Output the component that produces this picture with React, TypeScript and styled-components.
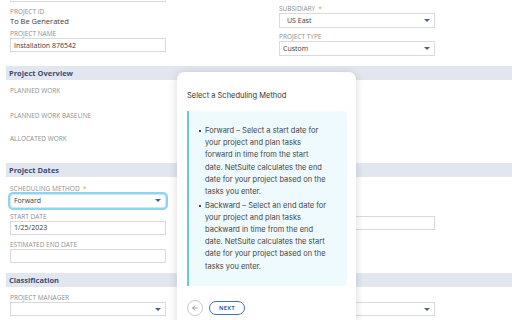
import styled, { createGlobalStyle } from "styled-components";
import { ArrowLeft } from "lucide-react";

const GlobalStyle = createGlobalStyle`
	body {
		margin: 0;
		background: #fff;
		font-family: "Open Sans", "Liberation Sans", sans-serif;
	}
	* {
		box-sizing: border-box;
	}
`;

const Page = styled.div`
	position: relative;
	width: 512px;
	height: 320px;
	overflow: hidden;
	padding-left: 6px;
`;

const Scrolled = styled.div`
	margin-top: -13px;
`;

const Columns = styled.div<{ $top?: number }>`
	display: grid;
	grid-template-columns: 156px 156px;
	column-gap: 113px;
	padding-left: 4px;
	padding-top: ${(p) => p.$top ?? 0}px;
`;

const Column = styled.div`
	display: flex;
	flex-direction: column;
`;

const Band = styled.div<{ $top: number }>`
	margin-top: ${(p) => p.$top}px;
	height: 14px;
	line-height: 14px;
	padding-left: 3px;
	background: #e2e7ef;
	color: #3b4d73;
	font-size: 7.5px;
	font-weight: 700;
`;

const Label = styled.div<{ $top?: number }>`
	margin-top: ${(p) => p.$top ?? 0}px;
	height: 9px;
	line-height: 9px;
	font-size: 6.5px;
	color: #8f8f8f;
	text-transform: uppercase;
	white-space: nowrap;
`;

const Star = styled.span`
	margin-left: 3px;
	color: #e9a23b;
	font-size: 7px;
`;

const Value = styled.div`
	height: 11px;
	line-height: 11px;
	font-size: 7.5px;
	color: #3a3a3a;
`;

const Input = styled.div<{ $top?: number; $height?: number; $indent?: number; $focus?: boolean }>`
	margin-top: ${(p) => p.$top ?? 0}px;
	height: ${(p) => p.$height ?? 14}px;
	display: flex;
	align-items: center;
	justify-content: space-between;
	padding: 0 4px 0 ${(p) => p.$indent ?? 3}px;
	border: 1px solid ${(p) => (p.$focus ? "#c9e9f6" : "#dadada")};
	border-radius: ${(p) => (p.$focus ? 3 : 0)}px;
	box-shadow: ${(p) => (p.$focus ? "0 0 0 2px #8ed4ef" : "none")};
	background: #fff;
	font-size: 7px;
	color: #3a3a3a;
	white-space: nowrap;
`;

const Caret = styled.span`
	width: 0;
	height: 0;
	border-left: 3px solid transparent;
	border-right: 3px solid transparent;
	border-top: 3.5px solid #4b6390;
`;

const Overview = styled.div`
	padding-left: 4px;
	padding-top: 5.5px;
`;

const Popover = styled.div`
	position: absolute;
	left: 177px;
	top: 72px;
	width: 179px;
	height: 270px;
	padding: 18px 9px 0 10px;
	background: #fff;
	border-radius: 7px;
	box-shadow: 0 1px 9px rgba(0, 0, 0, 0.16);
	font-family: Inter, "Liberation Sans", sans-serif;
`;

const Title = styled.div`
	font-size: 7.5px;
	line-height: 12px;
	color: #333;
`;

const InfoBox = styled.div`
	margin-top: 8.5px;
	width: 160px;
	padding: 14.5px 6px 13px 16px;
	background: #eefafd;
	border-left: 2px solid #67c7e7;
	border-radius: 0 4px 4px 0;
`;

const Points = styled.ul`
	margin: 0;
	padding: 0;
	list-style: none;
`;

const Point = styled.li`
	position: relative;
	font-size: 7.5px;
	line-height: 12.2px;
	color: #454545;
	white-space: pre-line;

	& + & {
		margin-top: 1.3px;
	}

	&::before {
		content: "";
		position: absolute;
		left: -6.5px;
		top: 5px;
		width: 2.2px;
		height: 2.2px;
		background: #444;
	}
`;

const Actions = styled.div`
	display: flex;
	align-items: center;
	gap: 6px;
	margin-top: 14px;
`;

const BackButton = styled.button`
	width: 16px;
	height: 16px;
	padding: 0;
	display: flex;
	align-items: center;
	justify-content: center;
	border: 1px solid #c8c8c8;
	border-radius: 50%;
	background: #fff;
	color: #555;
`;

const NextButton = styled.button`
	width: 36px;
	height: 14px;
	padding: 0;
	border: 1px solid #4372b8;
	border-radius: 8px;
	background: #fff;
	color: #2f5e9e;
	font-family: "Open Sans", sans-serif;
	font-size: 5.5px;
	font-weight: 700;
	letter-spacing: 0.4px;
`;

const App = () => {
	return (
		<Page>
			<GlobalStyle />
			<Scrolled>
				<Columns>
					<Column>
						<Input $height={15} />
						<Label $top={5}>Project ID</Label>
						<Value>To Be Generated</Value>
						<Label $top={2}>Project Name</Label>
						<Input>Installation 876542</Input>
					</Column>
					<Column>
						<Label $top={17}>
							Subsidiary<Star>*</Star>
						</Label>
						<Input $height={15} $indent={7}>
							US East
							<Caret />
						</Input>
						<Label $top={4}>Project Type</Label>
						<Input $height={15}>
							Custom
							<Caret />
						</Input>
					</Column>
				</Columns>
			</Scrolled>

			<Band $top={10}>Project Overview</Band>
			<Overview>
				<Label>Planned Work</Label>
				<Label $top={16}>Planned Work Baseline</Label>
				<Label $top={14}>Allocated Work</Label>
			</Overview>

			<Band $top={20.5}>Project Dates</Band>
			<Columns>
				<Column>
					<Label $top={6.5}>
						Scheduling Method<Star>*</Star>
					</Label>
					<Input $top={1} $focus>
						Forward
						<Caret />
					</Input>
					<Label $top={4}>Start Date</Label>
					<Input>1/25/2023</Input>
					<Label $top={5.5}>Estimated End Date</Label>
					<Input />
				</Column>
				<Column>
					<Input $top={39} $height={13.5} />
				</Column>
			</Columns>

			<Band $top={9.5}>Classification</Band>
			<Columns>
				<Column>
					<Label $top={6.5}>Project Manager</Label>
					<Input>
						<span />
						<Caret />
					</Input>
				</Column>
				<Column>
					<Input $top={15.5}>
						<span />
						<Caret />
					</Input>
				</Column>
			</Columns>

			<Popover>
				<Title>Select a Scheduling Method</Title>
				<InfoBox>
					<Points>
						<Point>
							{"Forward – Select a start date for\nyour project and plan tasks\nforward in time from the start\ndate. NetSuite calculates the end\ndate for your project based on the\ntasks you enter."}
						</Point>
						<Point>
							{"Backward – Select an end date for\nyour project and plan tasks\nbackward in time from the end\ndate. NetSuite calculates the start\ndate for your project based on the\ntasks you enter."}
						</Point>
					</Points>
				</InfoBox>
				<Actions>
					<BackButton>
						<ArrowLeft size={8} strokeWidth={1.6} />
					</BackButton>
					<NextButton>NEXT</NextButton>
				</Actions>
			</Popover>
		</Page>
	);
};

export default App;
